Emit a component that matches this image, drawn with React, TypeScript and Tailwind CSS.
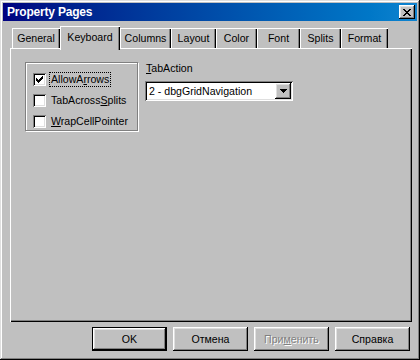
import React from 'react';

const tabs: { name: string; w: string; active?: boolean }[] = [
  { name: 'General', w: 'w-[48px]' },
  { name: 'Keyboard', w: 'w-[60px]', active: true },
  { name: 'Columns', w: 'w-[51px]' },
  { name: 'Layout', w: 'w-[45px]' },
  { name: 'Color', w: 'w-[41px]' },
  { name: 'Font', w: 'w-[43px]' },
  { name: 'Splits', w: 'w-[41px]' },
  { name: 'Format', w: 'w-[47px]' },
];

const raised =
  'shadow-[inset_-1px_-1px_#000,inset_1px_1px_#fff,inset_-2px_-2px_#808080,inset_2px_2px_#dfdfdf]';
const sunken =
  'shadow-[inset_1px_1px_#808080,inset_-1px_-1px_#fff,inset_2px_2px_#000,inset_-2px_-2px_#dfdfdf]';

const CheckBox: React.FC<{ checked?: boolean }> = ({ checked }) => (
  <span className={`flex h-[13px] w-[13px] shrink-0 items-center justify-center bg-white ${sunken}`}>
    {checked && (
      <svg width="7" height="7" viewBox="0 0 7 7" shapeRendering="crispEdges">
        <path d="M6 0h1v3h-1zM5 1h1v3h-1zM4 2h1v3h-1zM3 3h1v3h-1zM2 4h1v3h-1zM1 3h1v3h-1zM0 2h1v3h-1z" fill="#000" />
      </svg>
    )}
  </span>
);

const Button: React.FC<{ children: React.ReactNode; isDefault?: boolean; disabled?: boolean }> = ({
  children,
  isDefault,
  disabled,
}) => (
  <div className={`h-[24px] w-[75px] ${isDefault ? 'border border-black' : ''}`}>
    <div
      className={`flex h-full w-full items-center justify-center bg-[#c0c0c0] ${raised} ${
        disabled ? 'text-[#808080] [text-shadow:1px_1px_#fff]' : 'text-black'
      }`}
    >
      {children}
    </div>
  </div>
);

export default function App() {
  return (
    <div className="flex h-[360px] w-[420px] flex-col bg-[#c0c0c0] p-[3px] font-['Liberation_Sans',Arial,sans-serif] text-[10.6px] leading-[13px] text-black shadow-[inset_-1px_-1px_#000,inset_1px_1px_#dfdfdf,inset_-2px_-2px_#808080,inset_2px_2px_#fff]">
      {/* Title bar */}
      <div className="flex h-[18px] shrink-0 items-center justify-between bg-gradient-to-r from-[#000080] to-[#1084d0] pl-[4px] pr-[2px]">
        <span className="text-[12px] font-bold tracking-[-0.2px] text-white">Property Pages</span>
        <span className={`flex h-[14px] w-[16px] items-center justify-center bg-[#c0c0c0] ${raised}`}>
          <svg width="8" height="7" viewBox="0 0 8 7" shapeRendering="crispEdges">
            <path
              d="M0 0h2v1h-2zM6 0h2v1h-2zM1 1h2v1h-2zM5 1h2v1h-2zM2 2h4v1h-4zM3 3h2v1h-2zM2 4h4v1h-4zM1 5h2v1h-2zM5 5h2v1h-2zM0 6h2v1h-2zM6 6h2v1h-2z"
              fill="#000"
            />
          </svg>
        </span>
      </div>

      {/* Tabs + page */}
      <div className="ml-[7px] mr-[5px] mt-[5px] flex flex-col">
        <div className="flex h-[22px] items-end pl-[2px]">
          {tabs.map((t) =>
            t.active ? (
              <div
                key={t.name}
                className={`relative z-10 flex h-[24px] ${t.w} items-center justify-center self-start bg-[#c0c0c0] pb-[2px] shadow-[inset_1px_1px_#fff,inset_-1px_0_#000,inset_-2px_0_#808080]`}
              >
                {t.name}
              </div>
            ) : (
              <div
                key={t.name}
                className={`flex h-[20px] ${t.w} items-center justify-center pt-[1px] shadow-[inset_1px_1px_#fff,inset_-1px_0_#000,inset_-2px_0_#808080]`}
              >
                {t.name}
              </div>
            )
          )}
        </div>

        <div className="flex h-[274px] items-start pl-[15px] pt-[14px] shadow-[inset_1px_1px_#fff,inset_-1px_-1px_#000,inset_-2px_-2px_#808080]">
          {/* Check group */}
          <div className="flex h-[69px] w-[113px] flex-col gap-[6px] border border-[#808080] pl-[7px] pt-[9px] shadow-[1px_1px_#fff,inset_1px_1px_#fff]">
            <div className="flex items-center gap-[3px]">
              <CheckBox checked />
              <span className="border border-dotted border-black px-[1px]">
                AllowA<span className="underline">r</span>rows
              </span>
            </div>
            <div className="flex items-center gap-[3px]">
              <CheckBox />
              <span className="border border-transparent px-[1px]">
                TabAcross<span className="underline">S</span>plits
              </span>
            </div>
            <div className="flex items-center gap-[3px]">
              <CheckBox />
              <span className="border border-transparent px-[1px]">
                <span className="underline">W</span>rapCellPointer
              </span>
            </div>
          </div>

          {/* TabAction */}
          <div className="ml-[7px] flex flex-col">
            <span className="pl-[1px]">
              <span className="underline">T</span>abAction
            </span>
            <div className={`mt-[6px] flex h-[20px] w-[148px] items-center bg-white p-[2px] ${sunken}`}>
              <span className="flex-1 pl-[2px]">2 - dbgGridNavigation</span>
              <span className={`flex h-[16px] w-[16px] items-center justify-center bg-[#c0c0c0] ${raised}`}>
                <svg width="7" height="4" viewBox="0 0 7 4" shapeRendering="crispEdges">
                  <path d="M0 0h7v1h-7zM1 1h5v1h-5zM2 2h3v1h-3zM3 3h1v1h-1z" fill="#000" />
                </svg>
              </span>
            </div>
          </div>
        </div>
      </div>

      {/* Buttons */}
      <div className="mr-[7px] mt-[5px] flex justify-end gap-[6px]">
        <Button isDefault>OK</Button>
        <Button>Отмена</Button>
        <Button disabled>
          При<span className="underline">м</span>енить
        </Button>
        <Button>Справка</Button>
      </div>
    </div>
  );
}
